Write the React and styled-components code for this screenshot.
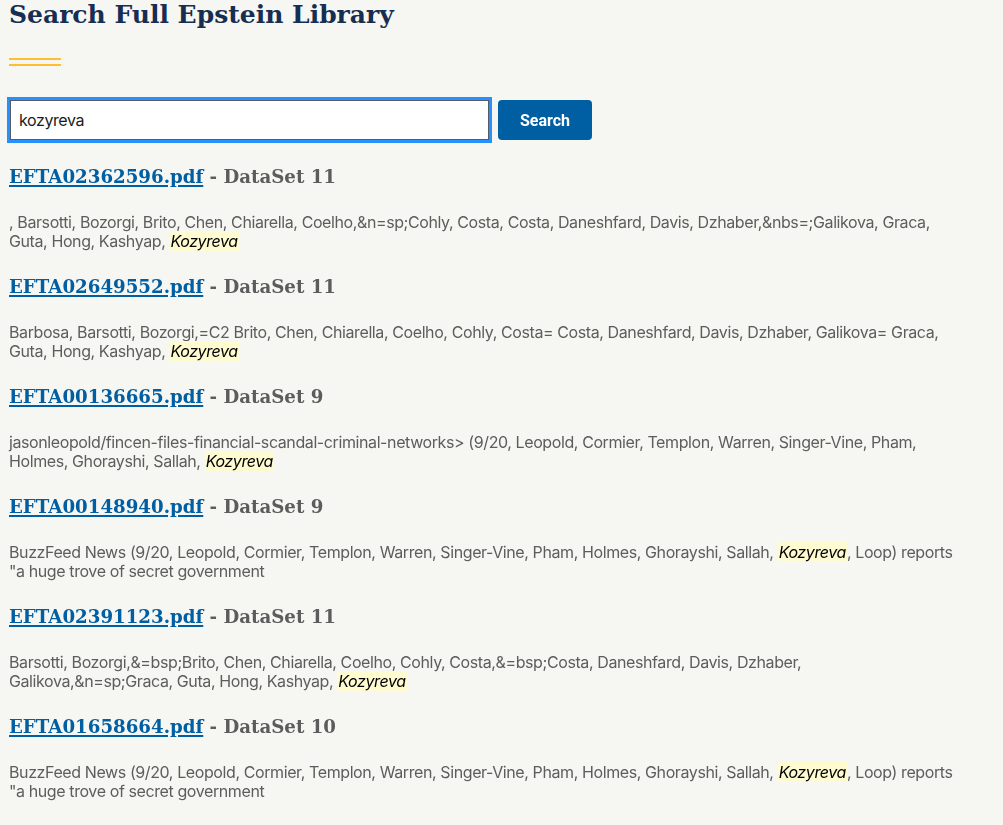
import React from "react";
import styled, { createGlobalStyle } from "styled-components";

const Global = createGlobalStyle`
  html, body { margin: 0; padding: 0; background: #f6f6f2; }
  body { font-family: "Inter", "Roboto", sans-serif; }
`;

const Page = styled.div`
  padding: 0 8px 0 9px;
  max-width: 960px;
`;

const Title = styled.h1`
  margin: 0;
  font-family: "DejaVu Serif", "Liberation Serif", serif;
  font-weight: 700;
  font-size: 25px;
  line-height: 30px;
  color: #162e51;
`;

const Rule = styled.div`
  margin-top: 28px;
  width: 52px;
  height: 8px;
  border-top: 2px solid #ffbe2e;
  border-bottom: 2px solid #ffbe2e;
  box-sizing: border-box;
`;

const SearchForm = styled.form`
  display: flex;
  align-items: center;
  gap: 8px;
  margin-top: 34px;
`;

const Input = styled.input`
  box-sizing: border-box;
  width: 479px;
  height: 40px;
  margin-left: 1px;
  border: 1px solid #565c65;
  outline: 3px solid #2491ff;
  outline-offset: 0;
  padding: 0 8px;
  font-family: "Inter", "Roboto", sans-serif;
  font-size: 16px;
  letter-spacing: -0.4px;
  color: #1b1b1b;
  background: #fff;
`;

const Button = styled.button`
  height: 40px;
  width: 94px;
  border: none;
  border-radius: 4px;
  background: #005ea2;
  color: #fff;
  font-family: "Roboto", "Liberation Sans", sans-serif;
  font-weight: 700;
  font-size: 16px;
  margin-left: 1px;
`;

const Results = styled.div`
  margin-top: 22px;
`;

const Result = styled.div`
  height: 110px;
`;

const ResultTitle = styled.h3`
  margin: 0;
  font-family: "DejaVu Serif", "Liberation Serif", serif;
  font-weight: 700;
  font-size: 18.2px;
  line-height: 30px;
  color: #5c5c5c;
`;

const FileLink = styled.a`
  color: #005ea2;
  text-decoration: underline;
  text-decoration-thickness: 2px;
  text-underline-offset: 2px;
`;

const Snippet = styled.p`
  margin: 21px 0 0;
  font-size: 16px;
  letter-spacing: -0.4px;
  line-height: 19px;
  color: #5d5d5d;
  max-width: 960px;
`;

const Mark = styled.mark`
  background: #fffbd1;
  color: #000;
  font-style: italic;
  padding: 0 1px;
`;

const results = [
  {
    file: "EFTA02362596.pdf",
    set: "DataSet 11",
    pre: ", Barsotti, Bozorgi, Brito, Chen, Chiarella, Coelho,&n=sp;Cohly, Costa, Costa, Daneshfard, Davis, Dzhaber,&nbs=;Galikova, Graca, Guta, Hong, Kashyap, ",
    post: "",
  },
  {
    file: "EFTA02649552.pdf",
    set: "DataSet 11",
    pre: "Barbosa, Barsotti, Bozorgi,=C2 Brito, Chen, Chiarella, Coelho, Cohly, Costa= Costa, Daneshfard, Davis, Dzhaber, Galikova= Graca, Guta, Hong, Kashyap, ",
    post: "",
  },
  {
    file: "EFTA00136665.pdf",
    set: "DataSet 9",
    pre: "jasonleopold/fincen-files-financial-scandal-criminal-networks> (9/20, Leopold, Cormier, Templon, Warren, Singer-Vine, Pham, Holmes, Ghorayshi, Sallah, ",
    post: "",
  },
  {
    file: "EFTA00148940.pdf",
    set: "DataSet 9",
    pre: "BuzzFeed News (9/20, Leopold, Cormier, Templon, Warren, Singer-Vine, Pham, Holmes, Ghorayshi, Sallah, ",
    post: ", Loop) reports \"a huge trove of secret government",
  },
  {
    file: "EFTA02391123.pdf",
    set: "DataSet 11",
    pre: "Barsotti, Bozorgi,&=bsp;Brito, Chen, Chiarella, Coelho, Cohly, Costa,&=bsp;Costa, Daneshfard, Davis, Dzhaber, Galikova,&n=sp;Graca, Guta, Hong, Kashyap, ",
    post: "",
  },
  {
    file: "EFTA01658664.pdf",
    set: "DataSet 10",
    pre: "BuzzFeed News (9/20, Leopold, Cormier, Templon, Warren, Singer-Vine, Pham, Holmes, Ghorayshi, Sallah, ",
    post: ", Loop) reports \"a huge trove of secret government",
  },
];

export default function App() {
  return (
    <>
      <Global />
      <Page>
        <Title>Search Full Epstein Library</Title>
        <Rule />
        <SearchForm onSubmit={(e) => e.preventDefault()}>
          <Input defaultValue="kozyreva" autoFocus />
          <Button type="submit">Search</Button>
        </SearchForm>
        <Results>
          {results.map((r) => (
            <Result key={r.file}>
              <ResultTitle>
                <FileLink href="#">{r.file}</FileLink> - {r.set}
              </ResultTitle>
              <Snippet>
                {r.pre}
                <Mark>Kozyreva</Mark>
                {r.post}
              </Snippet>
            </Result>
          ))}
        </Results>
      </Page>
    </>
  );
}
